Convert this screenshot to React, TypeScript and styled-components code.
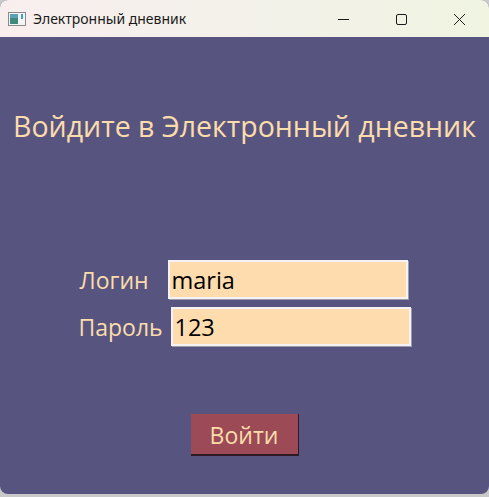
import styled, { createGlobalStyle } from "styled-components";

const GlobalStyle = createGlobalStyle`
    html, body {
        margin: 0;
        padding: 0;
        background: #c9c9c9;
    }
    body {
        font-family: "Open Sans", "Noto Sans", sans-serif;
    }
`

const AppIcon = () => (
    <svg width="18" height="14" viewBox="0 0 18 14">
        <rect x="0.5" y="0.5" width="17" height="13" fill="#f4f4f4" stroke="#8a8a8a"/>
        <rect x="2" y="2" width="8" height="10" fill="#3e8a7c"/>
        <rect x="2" y="2" width="8" height="4" fill="#5aa0b8"/>
        <rect x="13" y="2" width="2" height="5" fill="#3aa0d8"/>
    </svg>
)

export default function App() {
    return (
        <>
            <GlobalStyle/>
            <StyledWindow>
                <StyledTitleBar>
                    <StyledTitleLeft>
                        <AppIcon/>
                        <StyledWindowTitle>Электронный дневник</StyledWindowTitle>
                    </StyledTitleLeft>
                    <StyledControls>
                        <StyledControl>
                            <svg width="13" height="13" viewBox="0 0 13 13">
                                <path d="M1 6.5h11" stroke="#1b1b1b" strokeWidth="1"/>
                            </svg>
                        </StyledControl>
                        <StyledControl>
                            <svg width="13" height="13" viewBox="0 0 13 13">
                                <rect x="1.5" y="1.5" width="10" height="10" rx="1.5" fill="none" stroke="#1b1b1b"/>
                            </svg>
                        </StyledControl>
                        <StyledControl>
                            <svg width="13" height="13" viewBox="0 0 13 13">
                                <path d="M1 1l11 11M12 1L1 12" stroke="#1b1b1b" strokeWidth="1"/>
                            </svg>
                        </StyledControl>
                    </StyledControls>
                </StyledTitleBar>

                <StyledBody>
                    <StyledHeading>Войдите в Электронный дневник</StyledHeading>

                    <StyledForm>
                        <StyledRow>
                            <StyledLabel $width={88}>Логин</StyledLabel>
                            <StyledInput defaultValue="maria"/>
                        </StyledRow>
                        <StyledRow>
                            <StyledLabel $width={92}>Пароль</StyledLabel>
                            <StyledInput defaultValue="123"/>
                        </StyledRow>
                    </StyledForm>

                    <StyledButton>Войти</StyledButton>
                </StyledBody>
            </StyledWindow>
        </>
    )
}

const StyledWindow = styled.div`
    width: 489px;
    height: 494px;
    display: flex;
    flex-direction: column;
    border-radius: 8px;
    overflow: hidden;
    background: #575580;
`

const StyledTitleBar = styled.div`
    height: 37px;
    flex-shrink: 0;
    display: flex;
    align-items: center;
    justify-content: space-between;
    background: linear-gradient(90deg, #f8eeee 0%, #f3f1ea 50%, #f0f4e1 100%);
`

const StyledTitleLeft = styled.div`
    display: flex;
    align-items: center;
    gap: 7px;
    padding-left: 8px;
`

const StyledWindowTitle = styled.span`
    font-family: "Noto Sans", "Open Sans", sans-serif;
    font-size: 14px;
    color: #1b1b1b;
`

const StyledControls = styled.div`
    display: flex;
    height: 100%;
`

const StyledControl = styled.div`
    width: 58px;
    height: 100%;
    display: flex;
    align-items: center;
    justify-content: center;
    padding: 1px 2px 0 0;
    box-sizing: border-box;
`

const StyledBody = styled.div`
    flex: 1;
    display: flex;
    flex-direction: column;
    align-items: center;
`

const StyledHeading = styled.h1`
    margin: 72px 0 0;
    font-weight: 400;
    font-size: 28.5px;
    line-height: 34px;
    color: #fcdcab;
    white-space: nowrap;
`

const StyledForm = styled.div`
    margin-top: 117px;
    display: flex;
    flex-direction: column;
    gap: 8px;
    align-items: flex-start;
    width: 331px;
    padding-left: 1px;
`

const StyledRow = styled.div`
    display: flex;
    align-items: center;

    &:last-child {
        margin-left: -1px;
    }
`

const StyledLabel = styled.label<{ $width: number }>`
    width: ${p => p.$width}px;
    font-size: 23px;
    color: #fcdcab;
`

const StyledInput = styled.input`
    width: 240px;
    height: 39px;
    box-sizing: border-box;
    border: 2px solid #f4f2f4;
    box-shadow: 1px 1px 0 #9e9aa8;
    background: #ffdcad;
    font-family: "Open Sans", "Noto Sans", sans-serif;
    font-size: 23.5px;
    color: #000;
    padding: 0 2px;
    outline: none;
`

const StyledButton = styled.button`
    margin-top: 68px;
    width: 108px;
    height: 42px;
    border: none;
    border-bottom: 2px solid #2e1a22;
    border-right: 1px solid #2e1a22;
    background: #9b4a56;
    color: #fcdcab;
    font-family: "Open Sans", "Noto Sans", sans-serif;
    font-size: 23px;
    padding: 2px 0 0;
    cursor: pointer;
`
